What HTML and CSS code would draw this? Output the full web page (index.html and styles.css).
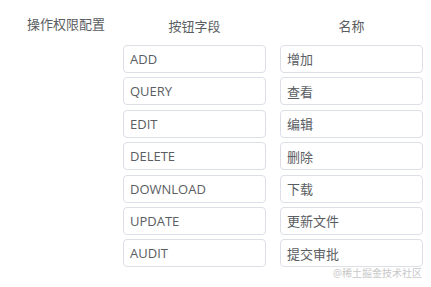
FILE: index.html
```html
<!DOCTYPE html>
<html lang="zh-CN">
<head>
    <meta charset="UTF-8">
    <title>操作权限配置</title>
    <link rel="stylesheet" href="styles.css">
</head>
<body>
    <div class="config">
        <div class="config-label">操作权限配置</div>
        <div class="config-table">
            <div class="col-head">按钮字段</div>
            <div class="col-head">名称</div>

            <input class="field" value="ADD" readonly>
            <input class="field" value="增加" readonly>
            <input class="field" value="QUERY" readonly>
            <input class="field" value="查看" readonly>
            <input class="field" value="EDIT" readonly>
            <input class="field" value="编辑" readonly>
            <input class="field" value="DELETE" readonly>
            <input class="field" value="删除" readonly>
            <input class="field" value="DOWNLOAD" readonly>
            <input class="field" value="下载" readonly>
            <input class="field" value="UPDATE" readonly>
            <input class="field" value="更新文件" readonly>
            <input class="field" value="AUDIT" readonly>
            <input class="field" value="提交审批" readonly>
        </div>
    </div>
    <div class="watermark">@稀土掘金技术社区</div>
</body>
</html>
```

FILE: styles.css
```css
body {
    margin: 0;
    font-family: "Open Sans", "Noto Sans CJK SC", sans-serif;
    font-size: 13px;
    color: #5a5d62;
    background: #fff;
}
.config {
    display: flex;
    padding: 14px 0 0 27px;
}
.config-label {
    width: 96px;
    line-height: 20px;
}
.config-table {
    display: grid;
    grid-template-columns: 143px 143px;
    column-gap: 14px;
    row-gap: 4.4px;
    margin-top: 2px;
}
.col-head {
    text-align: center;
    line-height: 20px;
    margin-bottom: 4.6px;
}
.field {
    box-sizing: border-box;
    width: 100%;
    height: 28px;
    margin: 0;
    padding: 0 6px;
    border: 1px solid #dcdfe6;
    border-radius: 4px;
    font-family: inherit;
    font-size: 13px;
    color: #5a5d62;
    background: #fff;
    outline: none;
}
.watermark {
    position: absolute;
    right: 9px;
    top: 265px;
    font-size: 10px;
    color: #c8c8c8;
}
```
